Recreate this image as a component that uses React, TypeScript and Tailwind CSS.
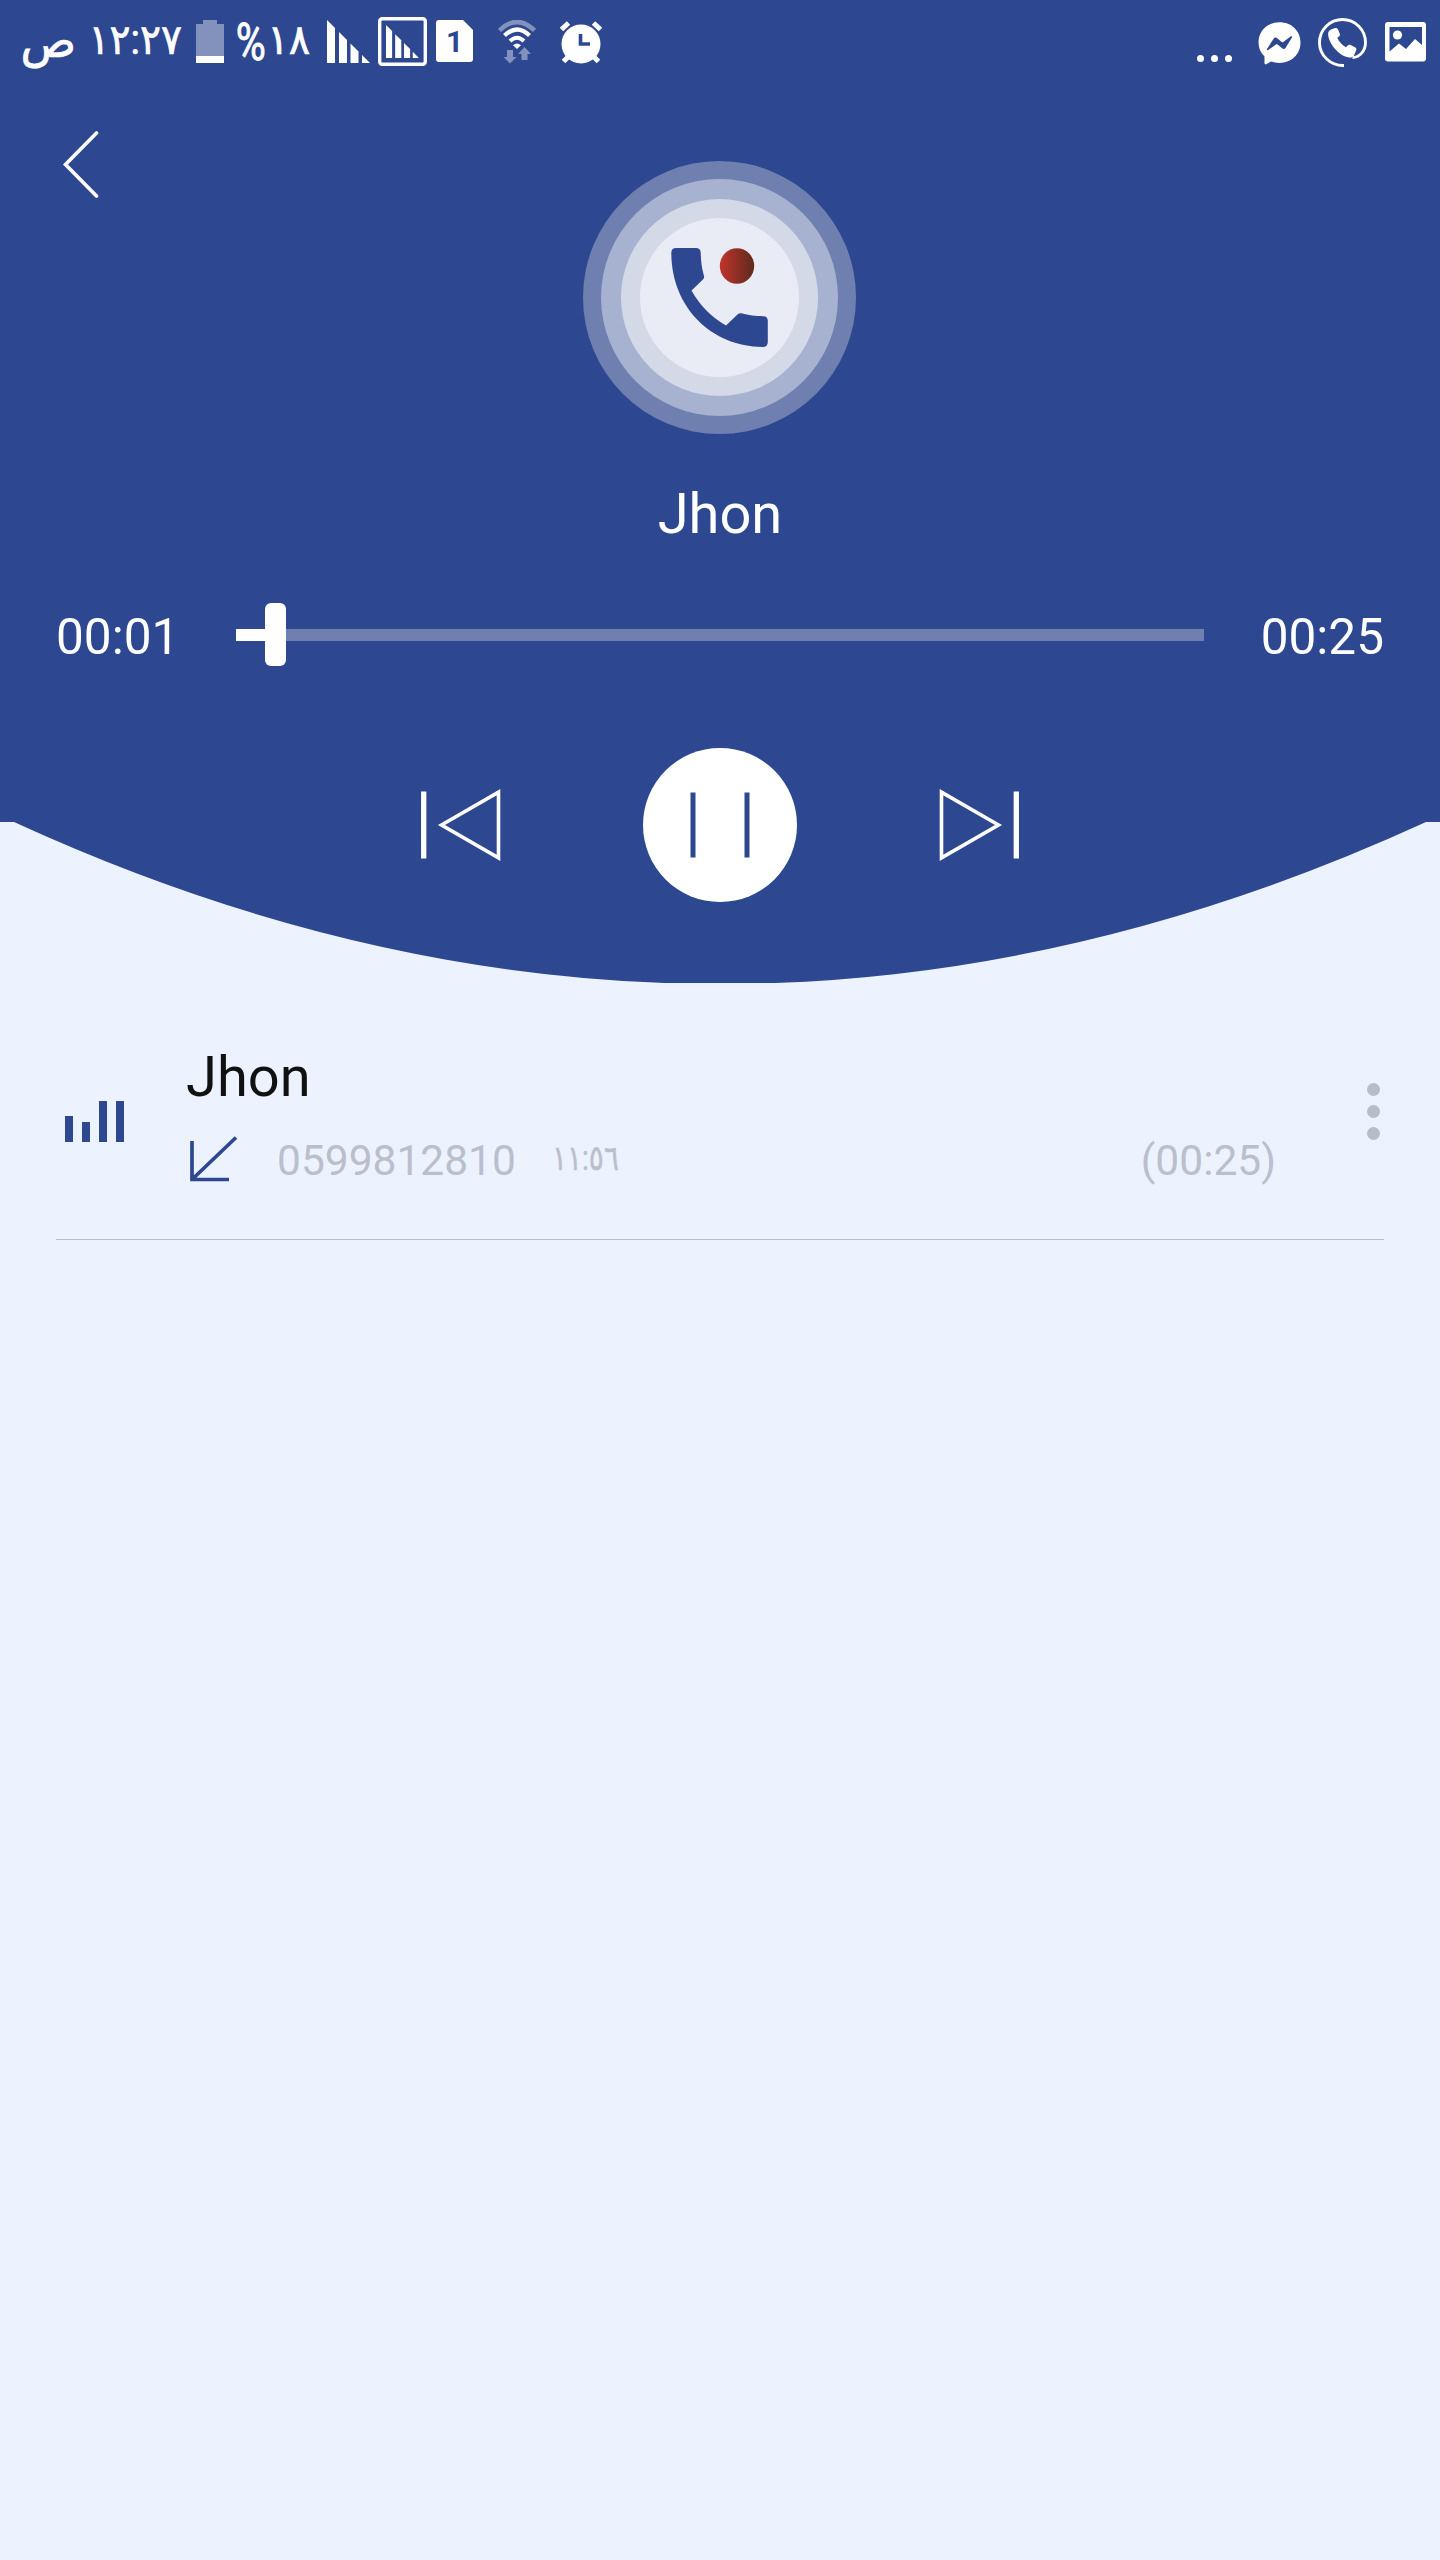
import { useState } from "react";

type Recording = {
  id: number;
  name: string;
  phone: string;
  time: string;
  duration: string;
};

const RECORDINGS: Recording[] = [
  { id: 1, name: "Jhon", phone: "0599812810", time: "١١:٥٦", duration: "00:25" },
];

function BatteryIcon() {
  return (
    <svg width="28" height="44" viewBox="0 0 28 44" shapeRendering="crispEdges">
      <path d="M7 0h14v4h7v32H0V4h7z" fill="#8391bd" />
      <rect y="36" width="28" height="7" fill="#fff" />
    </svg>
  );
}

function SignalBars() {
  return (
    <>
      <path d="M0 0l8 8v35H0z" />
      <path d="M12 12l8 8v23h-8z" />
      <path d="M23.500 23.500l8 8V43h-8z" />
      <path d="M35 35l8 8h-8z" />
    </>
  );
}

function SignalIcon() {
  return (
    <svg width="43" height="43" viewBox="0 0 43 43" fill="#fff">
      <SignalBars />
    </svg>
  );
}

function BoxedSignalIcon() {
  return (
    <svg width="49" height="49" viewBox="0 0 49 49">
      <rect x="1.700" y="1.700" width="45.600" height="45.600" rx="2.500" fill="none" stroke="#fff" strokeWidth="3.400" />
      <g transform="translate(8 8) scale(.765)" fill="#fff">
        <SignalBars />
      </g>
    </svg>
  );
}

function SimIcon() {
  return (
    <div className="flex h-[42px] w-[37px] items-center justify-center">
      <svg className="absolute" width="37" height="42" viewBox="0 0 37 42">
        <path d="M3 0h24l10 10v29a3 3 0 0 1-3 3H3a3 3 0 0 1-3-3V3a3 3 0 0 1 3-3z" fill="#fff" />
      </svg>
      <span className="relative top-px font-['Roboto',sans-serif] text-[30px] leading-none font-bold text-[#2d4890]">1</span>
    </div>
  );
}

function WifiIcon() {
  return (
    <svg width="38" height="44" viewBox="0 0 38 44" fill="none">
      <path d="M1.500 10.500Q19-6.500 36.500 10.500" stroke="#8391bd" strokeWidth="4.500" />
      <path d="M6.500 15.500Q19 3.500 31.500 15.500" stroke="#fff" strokeWidth="4.200" />
      <path d="M12 21Q19 14.500 26 21" stroke="#fff" strokeWidth="4" />
      <path d="M15 25.200q4-3.400 8 0L19 29z" fill="#fff" />
      <path d="M9 30h6v7h3.500L12 43.500 5.500 37H9z" fill="#8391bd" />
      <path d="M23.500 40h6v-6H33l-6.500-7-6.500 7h3.500z" fill="#8391bd" />
    </svg>
  );
}

function AlarmIcon() {
  return (
    <svg width="42" height="43" viewBox="0 0 42 43" fill="none">
      <circle cx="21" cy="23" r="19.500" fill="#fff" />
      <path d="M1.500 8.500l7-6.500M40.500 8.500l-7-6.500" stroke="#fff" strokeWidth="5" />
      <path d="M8 36l-4.500 4.500M34 36l4.500 4.500" stroke="#fff" strokeWidth="5" />
      <path d="M20.500 13v10H30" stroke="#2d4890" strokeWidth="3.600" />
    </svg>
  );
}

function MessengerIcon() {
  return (
    <svg width="43" height="43" viewBox="0 0 43 43">
      <path
        d="M21.500.3C9.500.3.500 8.800.500 20.500c0 5.600 2.200 10.500 6 14v6.800c0 .900.900 1.400 1.700 1L13 39.500c2.700.9 5.500 1.400 8.500 1.400 12 0 21-8.700 21-20.400S33.500.3 21.500.3z"
        fill="#fff"
      />
      <path
        d="M9 27l6.800-10.600c.7-1.100 2.100-1.300 3.100-.5l4.800 4c.500.400 1.100.400 1.600 0l7.600-5.600c.8-.5 1.700.2 1.200 1L27.500 26c-.7 1.100-2.100 1.300-3.100.5l-4.800-4c-.5-.4-1.100-.4-1.600 0L10.200 28c-.800.500-1.700-.2-1.200-1z"
        fill="#2d4890"
      />
    </svg>
  );
}

function CallIcon() {
  return (
    <svg width="49" height="49" viewBox="0 0 49 49" fill="none">
      <path
        d="M26 47.500C12.500 48 1.500 37.500 1.500 24.500a23 23 0 0 1 46 0c0 9-6.500 15-13 15"
        stroke="#fff"
        strokeWidth="2.900"
      />
      <path
        d="M13 11.500l4-1.500c1.500-.4 2.500.2 3 1.500l1.800 4.300c.5 1.300 0 2.200-1.200 3l-1.300 1c1.700 4 5 7.500 8.700 9.500l1.700-1.800c.8-.9 1.800-1 2.900-.5l4.400 2.200c1.300.6 1.700 1.700 1.200 3l-1.700 4.300c-1 2.500-3 3.300-5.500 3C21 38 11.500 26.500 10.200 17.500c-.4-2.800.4-4.900 2.800-6z"
        fill="#fff"
      />
    </svg>
  );
}

function PictureIcon() {
  return (
    <svg width="41" height="40" viewBox="0 0 41 40">
      <path
        fillRule="evenodd"
        d="M3 0h35a3 3 0 0 1 3 3v33.500a3 3 0 0 1-3 3H3a3 3 0 0 1-3-3V3a3 3 0 0 1 3-3zM4.500 5v24.500l9.500-8 7 5.500 9-10 7 6V5z"
        fill="#fff"
      />
      <circle cx="12.500" cy="13" r="4.600" fill="#fff" />
    </svg>
  );
}

function StatusBar() {
  return (
    <div className="flex h-[88px] items-start justify-between pr-[14px] pl-5 text-white">
      <div className="flex items-start font-['Roboto','DejaVu_Sans',sans-serif]">
        <div dir="rtl" className="mt-[19px] flex w-[162px] items-start text-[42px] leading-none whitespace-nowrap [-webkit-text-stroke:0.7px]">
          <span className="w-[98px] shrink-0 origin-right scale-x-[.93] tracking-[-1.5px]">١٢:٢٧</span>
          <span className="mr-[8px] translate-y-px text-[46px] leading-[42px]">ص</span>
        </div>
        <div className="mt-5 ml-[14px]"><BatteryIcon /></div>
        <div dir="rtl" className="mt-[19px] ml-[12px] flex w-[74px] items-start text-[42px] leading-none whitespace-nowrap [-webkit-text-stroke:0.7px]">
          <span className="origin-right scale-x-[.95] tracking-[-1.5px]">١٨</span>
          <span className="-mr-px translate-y-[2px] scale-y-[1.25] text-[41px] leading-[42px]">%</span>
        </div>
        <div className="mt-5 ml-[17px]"><SignalIcon /></div>
        <div className="mt-[17px] ml-2"><BoxedSignalIcon /></div>
        <div className="mt-5 ml-[9px]"><SimIcon /></div>
        <div className="mt-5 ml-[25px]"><WifiIcon /></div>
        <div className="mt-[21px] ml-[24px]"><AlarmIcon /></div>
      </div>
      <div className="flex items-start">
        <div className="mt-[55px] flex gap-[7px]">
          <span className="size-[7px] rounded-full bg-white" />
          <span className="size-[7px] rounded-full bg-white" />
          <span className="size-[7px] rounded-full bg-white" />
        </div>
        <div className="mt-[22px] ml-[26px]"><MessengerIcon /></div>
        <div className="mt-[18px] ml-[17px]"><CallIcon /></div>
        <div className="mt-[22px] ml-[18px]"><PictureIcon /></div>
      </div>
    </div>
  );
}

function CallBadge() {
  return (
    <svg width="273" height="273" viewBox="0 0 273 273">
      <defs>
        <linearGradient id="rec" x1="0" y1="0" x2="1" y2="0">
          <stop offset="0" stopColor="#c1342c" />
          <stop offset="1" stopColor="#5e2a1c" />
        </linearGradient>
      </defs>
      <circle cx="136.500" cy="136.500" r="136.500" fill="#6e7fb0" />
      <circle cx="136.500" cy="136.500" r="118.500" fill="#a7b2d0" />
      <circle cx="136.500" cy="136.500" r="98.500" fill="#d3d9e7" />
      <circle cx="136.500" cy="136.500" r="79.500" fill="#e9ecf4" />
      <path
        d="M93 87h20q4.500 0 4.700 4.500c.2 8 .8 14.500 3.300 23.500q.5 2-1 3.500L108.500 129.500c8 14.500 19 26 34.500 35l11.500-11q1.800-1.800 4-1.200c7.500 2 13 2.700 22 3q4.300.2 4.300 4.700v21q0 5-5 5C128 185.500 88.500 146 88.300 92q0-5 4.700-5z"
        fill="#2d4890"
      />
      <ellipse cx="154" cy="105" rx="17.200" ry="17.800" fill="url(#rec)" />
    </svg>
  );
}

function SkipIcon({ flip = false }: { flip?: boolean }) {
  return (
    <svg className={flip ? "-scale-x-100" : ""} width="80" height="74" viewBox="0 0 80 74" fill="none" stroke="#fff">
      <path d="M2.700 3.500v67" strokeWidth="5.300" />
      <path d="M20.500 37L77.500 4.200v65.600z" strokeWidth="3.600" />
    </svg>
  );
}

function Player() {
  const [playing, setPlaying] = useState(true);
  const progress = 4.1;

  return (
    <header className="relative h-[983px] font-['Roboto',sans-serif] text-white">
      <svg className="absolute inset-0" width="1440" height="983" viewBox="0 0 1440 983">
        <path d="M0 0h1440v822h-14Q720 1146 14 822H0z" fill="#2d4890" />
      </svg>

      <div className="relative">
        <StatusBar />

        <div className="grid grid-cols-3 items-start px-14">
          <button className="mt-[42px] ml-[6px] justify-self-start">
            <svg width="38" height="68" viewBox="0 0 38 68" fill="none" stroke="#fff" strokeWidth="3.600" strokeLinecap="round">
              <path d="M34.500 3L3.500 34.500l31 31.500" />
            </svg>
          </button>
          <div className="mt-[73px] justify-self-center">
            <CallBadge />
          </div>
        </div>

        <h1 className="mt-[52px] text-center text-[56px] leading-none">Jhon</h1>

        <div className="mt-[61px] flex items-start justify-between px-14">
          <span className="mt-[10px] text-[49.500px] leading-none">00:01</span>
          <div className="relative flex h-[63px] w-[968px] items-center">
            <div className="h-3 w-full bg-[#6e7fb0]">
              <div className="h-3 bg-white" style={{ width: `${progress}%` }} />
            </div>
            <div className="absolute left-[29px] h-[63px] w-[21px] rounded-md bg-white" />
          </div>
          <span className="mt-[10px] text-[49.500px] leading-none">00:25</span>
        </div>

        <div className="mt-[82px] flex items-center justify-center gap-[142px]">
          <button><SkipIcon /></button>
          <button
            onClick={() => setPlaying(!playing)}
            className="flex size-[154px] items-center justify-center rounded-full bg-white"
          >
            {playing ? (
              <svg width="60" height="66" viewBox="0 0 60 66" fill="#2d4890">
                <rect x="0.500" y="0.500" width="5" height="65" />
                <rect x="54.500" y="0.500" width="5" height="65" />
              </svg>
            ) : (
              <svg width="60" height="66" viewBox="0 0 60 66" fill="none" stroke="#2d4890" strokeWidth="4">
                <path d="M10 4l44 29-44 29z" />
              </svg>
            )}
          </button>
          <button><SkipIcon flip /></button>
        </div>
      </div>
    </header>
  );
}

function RecordingRow({ item }: { item: Recording }) {
  return (
    <li className="mx-14 flex h-[257px] items-start border-b border-[#b8bccb] font-['Roboto',sans-serif]">
      <svg className="mt-[118px] ml-[9px]" width="60" height="41" viewBox="0 0 60 41" fill="#2d4890">
        <rect x="0" y="15" width="8" height="26" />
        <rect x="17" y="21" width="8" height="20" />
        <rect x="34" y="0" width="8" height="41" />
        <rect x="51" y="0" width="8" height="41" />
      </svg>

      <div className="mt-[66px] ml-[61px] flex-1">
        <p className="text-[56px] leading-none text-[#111]">{item.name}</p>
        <div className="mt-[18px] flex items-start text-[#bbbfcc]">
          <svg className="mt-[13px] ml-[4px]" width="48" height="47" viewBox="0 0 48 47" fill="none" stroke="#2d4890" strokeWidth="3.700">
            <path d="M2 5v38.500h37M2 43.500L46 1.500" />
          </svg>
          <span className="mt-[17px] ml-[39px] text-[42.500px] leading-none">{item.phone}</span>
          <span className="mt-[18px] ml-[36px] origin-left scale-x-[.8] font-['Roboto','DejaVu_Sans',sans-serif] text-[35px] leading-none tracking-[-2.5px] [-webkit-text-stroke:0.5px]">
            {item.time}
          </span>
          <span className="mt-[17px] ml-auto text-[42.500px] leading-none">({item.duration})</span>
        </div>
      </div>

      <button className="mt-[100px] ml-[91px] flex flex-col gap-[9px] pr-1">
        <span className="size-[13px] rounded-full bg-[#b7bcc9]" />
        <span className="size-[13px] rounded-full bg-[#b7bcc9]" />
        <span className="size-[13px] rounded-full bg-[#b7bcc9]" />
      </button>
    </li>
  );
}

export default function App() {
  return (
    <div className="min-h-[2560px] w-[1440px] bg-[#ecf3ff]">
      <Player />
      <ul>
        {RECORDINGS.map((r) => (
          <RecordingRow key={r.id} item={r} />
        ))}
      </ul>
    </div>
  );
}
